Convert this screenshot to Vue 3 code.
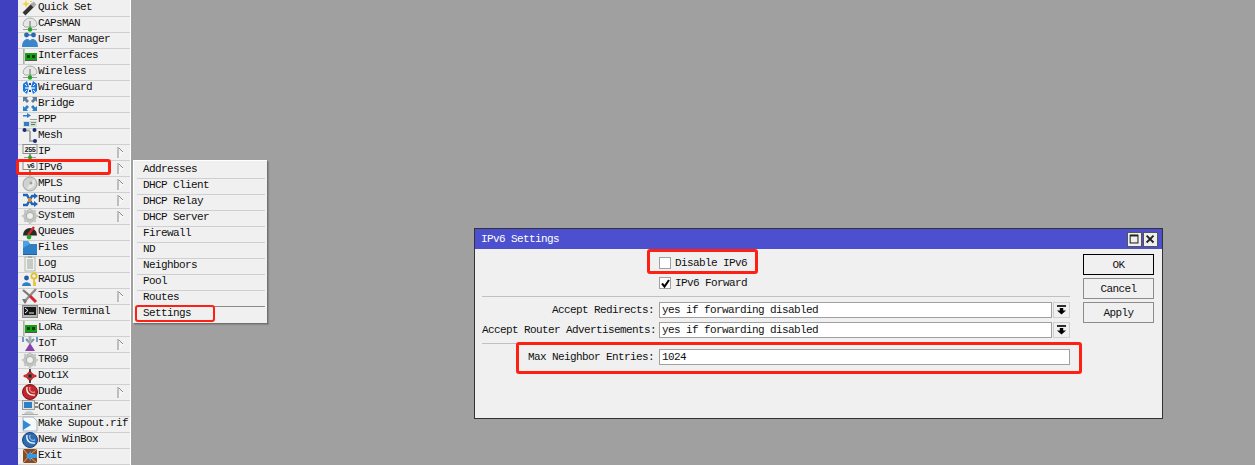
<script setup>
const icons = {
  wand: '<path d="M2 14 L11 5" stroke="#333" stroke-width="4"/><path d="M10 6 L13 3" stroke="#aaa" stroke-width="4"/><path d="M4 0 L5 3 L8 4 L5 5 L4 8 L3 5 L0 4 L3 3 Z" fill="#f2d22e"/><path d="M8 1h2v1H8z" fill="#f2d22e"/>',
  dome: '<path d="M1 9 A7 7 0 0 1 15 9 L13 11 H3 Z" fill="#e6e8e6" stroke="#a8aca8"/><path d="M8 5 V12" stroke="#8a8f8a" stroke-width="1.4"/><rect x="1" y="13" width="14" height="1" fill="#9a9f9a"/><circle cx="8" cy="13.5" r="2.2" fill="#1fa51f"/>',
  users: '<circle cx="4.5" cy="3" r="2.4" fill="#2a6aa8"/><circle cx="11.5" cy="3" r="2.4" fill="#2a6aa8"/><rect x="6" y="2.4" width="4" height="1.2" fill="#2a6aa8"/><path d="M0 15 C0 8 4 7 5.5 7 C7 7 8 8 8 9 C8 8 9 7 10.5 7 C12 7 16 8 16 15 Z" fill="#3a86cc"/>',
  card: '<rect x="1" y="1" width="1.6" height="15" fill="#a9b4a9"/><rect x="3" y="5" width="12" height="7" fill="#17a017"/><rect x="5" y="7" width="3" height="3" fill="#1a3a1a"/><rect x="10" y="7" width="3" height="3" fill="#1a3a1a"/><rect x="3" y="12" width="12" height="1" fill="#555"/>',
  wireguard: '<path d="M1 4 L5 1 L7 7 L5 14 L1 11 Z" fill="#1977dd"/><path d="M15 4 L11 1 L9 7 L11 14 L15 11 Z" fill="#1977dd"/><path d="M3 8 H13" stroke="#fff" stroke-width="1.2"/><path d="M3 4 L5 6 M13 4 L11 6 M3 12 L5 10 M13 12 L11 10" stroke="#fff"/><path d="M7 3h2v2H7zM7 10h2v2H7z" fill="#0e4f9e"/>',
  bridge: '<path d="M1 1 H6 L4.6 2.6 L7 5 L5 7 L2.6 4.6 L1 6 Z" fill="#5f7d9b"/><path d="M15 1 H10 L11.4 2.6 L9 5 L11 7 L13.4 4.6 L15 6 Z" fill="#5f7d9b"/><path d="M1 15 H6 L4.6 13.4 L7 11 L5 9 L2.6 11.4 L1 10 Z" fill="#2f7fc7"/><path d="M15 15 H10 L11.4 13.4 L9 11 L11 9 L13.4 11.4 L15 10 Z" fill="#2f7fc7"/>',
  ppp: '<path d="M1 3 H5 V1 L9 3.5 L5 6 V4.5 H1 Z" fill="#2f7fc7"/><rect x="1" y="9" width="14" height="6" fill="#d8dcd8"/><rect x="2" y="10" width="5" height="4" fill="#2f7fc7"/><rect x="8" y="7" width="7" height="1" fill="#9aa09a"/><rect x="9" y="10" width="5" height="1" fill="#8a8f8a"/><rect x="9" y="12" width="4" height="1" fill="#28a028"/>',
  mesh: '<path d="M3 2.5 H8 M8 3 V13 H13" stroke="#a8aca8" stroke-width="2" fill="none"/><circle cx="2.5" cy="2" r="2" fill="#1b2c7a"/><circle cx="12.5" cy="2" r="2" fill="#1b2c7a"/><circle cx="13" cy="13" r="2" fill="#1b2c7a"/>',
  ip: '<rect x="1" y="0.5" width="14" height="9" fill="#f4f4f4" stroke="#8a8f8a"/><text x="8" y="8" text-anchor="middle" font-family="Liberation Mono" font-size="7" font-weight="700" fill="#222">255</text><rect x="7" y="10" width="2" height="3" fill="#8a8f8a"/><rect x="2" y="13" width="12" height="1" fill="#9a9f9a"/><circle cx="8" cy="13.5" r="2" fill="#1fa51f"/>',
  ipv6: '<rect x="1" y="0.5" width="14" height="9" fill="#f4f4f4" stroke="#8a8f8a"/><text x="8.5" y="8" text-anchor="middle" font-family="Liberation Mono" font-size="7" font-weight="700" fill="#222">v6</text><rect x="7" y="10" width="2" height="3" fill="#8a8f8a"/><rect x="2" y="13" width="12" height="1" fill="#9a9f9a"/><circle cx="8" cy="13.5" r="2" fill="#1fa51f"/>',
  disc: '<circle cx="8" cy="8" r="7" fill="#cfd3cf" stroke="#a0a5a0"/><path d="M12 3 A7 7 0 0 1 5 13 L8 8 Z" fill="#e8eae8"/><circle cx="9" cy="7" r="1.5" fill="#9ba09b"/>',
  routing: '<path d="M1 3 H5 L10 12 H13" stroke="#1e66b8" stroke-width="2.4" fill="none"/><path d="M1 13 H5 L10 4 H13" stroke="#1e66b8" stroke-width="2.4" fill="none"/><path d="M12 1 L16 4 L12 7 Z M12 9 L16 12 L12 15 Z" fill="#1e66b8"/><rect x="6" y="6" width="3" height="4" fill="#d88a2a"/>',
  gear: '<circle cx="8" cy="8" r="5" fill="none" stroke="#bcc0bc" stroke-width="3.4"/><path d="M8 0 V16 M0 8 H16 M2.3 2.3 L13.7 13.7 M13.7 2.3 L2.3 13.7" stroke="#c4c8c4" stroke-width="2.2"/><circle cx="8" cy="8" r="3.6" fill="#f0f0f0" stroke="#a8aca8"/>',
  queues: '<path d="M1 11 A7 7 0 0 1 15 11 Z" fill="#2a2a2a"/><path d="M6 11 L12 3" stroke="#d8242a" stroke-width="2.4"/><rect x="1" y="11" width="14" height="1" fill="#888"/><circle cx="7" cy="13" r="2.4" fill="#1fa51f"/>',
  folder: '<path d="M1 1 H6 L8 4 H15 V15 H1 Z" fill="#2f7fc7"/><path d="M1 1 H6 L8 4 L1 8 Z" fill="#4da0e4"/><rect x="1" y="14" width="14" height="1" fill="#1f5f9f"/>',
  log: '<rect x="3" y="1" width="10" height="14" fill="#f0f2ee" stroke="#b0b8ae"/><path d="M5 4h6M5 6h6M5 8h6M5 10h6M5 12h6" stroke="#9aa49a"/><rect x="6" y="0" width="4" height="2" fill="#a8b0a6"/>',
  radius: '<circle cx="4.5" cy="6" r="2.4" fill="#1f5f9f"/><path d="M0 14 C0 9 9 9 9 14 Z" fill="#2f7fc7"/><circle cx="12" cy="4" r="2.6" fill="none" stroke="#e3c028" stroke-width="1.8"/><path d="M12 7 V14 M12 11 H14 M12 13 H14" stroke="#e3c028" stroke-width="1.6"/>',
  tools: '<path d="M14 1 L2 14" stroke="#8e908e" stroke-width="2.4"/><path d="M0 11 L3 16 L5 13 L3 11 Z" fill="#777"/><path d="M1 2 L8 8" stroke="#777" stroke-width="2.2"/><path d="M8 8 L14 14" stroke="#d8242a" stroke-width="3"/>',
  terminal: '<rect x="0.5" y="1.5" width="15" height="12" fill="#b5b8b5" stroke="#888"/><rect x="2" y="3" width="12" height="8" fill="#181818"/><path d="M3 4 L6 6.5 L3 9" stroke="#eee" fill="none"/><path d="M7 9h5" stroke="#eee"/>',
  iot: '<path d="M3 15 L8 7 L13 15 Z" fill="#8a3fa8"/><path d="M4 3 L8 7 L12 3" stroke="#7a94a8" stroke-width="2.2" fill="none"/><rect x="6.6" y="0" width="2.8" height="7" fill="#a8b0b8"/><path d="M1 1 V6 M15 1 V6" stroke="#3a74b0" stroke-width="1.4"/>',
  dot1x: '<path d="M8 4 L12 8 L8 12 L4 8 Z" fill="none" stroke="#c0262a" stroke-width="2"/><circle cx="8" cy="8" r="2" fill="#222"/><path d="M8 1 V4 M8 12 V15" stroke="#222" stroke-width="1.6"/><path d="M1 8 L3.5 6 V10 Z M15 8 L12.5 6 V10 Z" fill="#c0262a"/>',
  dude: '<circle cx="8" cy="8" r="7.5" fill="#c0262a"/><circle cx="8" cy="8" r="7.5" fill="none" stroke="#7a1518"/><path d="M5 3 C4 8 7 12 13 11" stroke="#fff" stroke-width="1.2" fill="none"/><path d="M8 3 C7 7 9 9 13 8" stroke="#f6c4c4" fill="none"/>',
  container: '<rect x="0.5" y="0.5" width="12" height="9" fill="#dfe2df" stroke="#999"/><rect x="2" y="2" width="8" height="6" fill="#2f7fc7"/><rect x="13" y="2" width="3" height="2" fill="#888"/><rect x="13" y="6" width="3" height="2" fill="#888"/><path d="M2 14 C3 10 11 10 12 14 Z" fill="#c8ccc8"/><rect x="0" y="14" width="16" height="1" fill="#a8aca8"/>',
  supout: '<path d="M1 1 H11 L15 5 V15 H1 Z" fill="#f6f8fa" stroke="#a8b4c0"/><path d="M1 4 L9 9 L1 14 Z" fill="#2f8ad8"/>',
  winbox: '<circle cx="8" cy="8" r="7.5" fill="#2c6cb4"/><circle cx="8" cy="8" r="7.5" fill="none" stroke="#1c4478"/><path d="M5 3 C4 8 7 12 13 11" stroke="#fff" stroke-width="1.2" fill="none"/><path d="M8 3 C7 7 9 9 13 8" stroke="#c4daf0" fill="none"/>',
  exit: '<rect x="1" y="1" width="14" height="14" fill="#8a4a22"/><path d="M1 1 L7 8 L1 15 M15 1 L9 6 M15 15 L9 10" stroke="#e0a878" fill="none"/><path d="M4 8 L9 3 V6 H15 V10 H9 V13 Z" fill="#2f9ae8"/>'
}

const items = [
  ['Quick Set', 'wand'], ['CAPsMAN', 'dome'], ['User Manager', 'users'], ['Interfaces', 'card'],
  ['Wireless', 'dome'], ['WireGuard', 'wireguard'], ['Bridge', 'bridge'], ['PPP', 'ppp'],
  ['Mesh', 'mesh'], ['IP', 'ip', true], ['IPv6', 'ipv6', true], ['MPLS', 'disc', true],
  ['Routing', 'routing', true], ['System', 'gear', true], ['Queues', 'queues'], ['Files', 'folder'],
  ['Log', 'log'], ['RADIUS', 'radius'], ['Tools', 'tools', true], ['New Terminal', 'terminal'],
  ['LoRa', 'card'], ['IoT', 'iot', true], ['TR069', 'gear'], ['Dot1X', 'dot1x'],
  ['Dude', 'dude', true], ['Container', 'container'], ['Make Supout.rif', 'supout'],
  ['New WinBox', 'winbox'], ['Exit', 'exit']
].map(([label, icon, more]) => ({ label, icon, more }))

const subItems = ['Addresses', 'DHCP Client', 'DHCP Relay', 'DHCP Server', 'Firewall', 'ND', 'Neighbors', 'Pool', 'Routes', 'Settings']
</script>

<template>
  <div class="desktop">
    <div class="strip"></div>
    <nav class="menu">
      <div v-for="item in items" :key="item.label" class="row">
        <svg class="icon" viewBox="0 0 16 16" width="16" height="16" v-html="icons[item.icon]"></svg>
        <span class="label">{{ item.label }}</span>
        <svg v-if="item.more" class="more" viewBox="0 0 7 11" width="7" height="11">
          <path d="M1 0 V11" stroke="#8c8c8c" fill="none" />
          <path d="M2 9 L6 5" stroke="#ffffff" fill="none" />
          <path d="M2 1 L6 5" stroke="#8c8c8c" fill="none" />
        </svg>
      </div>
    </nav>
    <main class="canvas"></main>

    <div class="submenu">
      <div v-for="s in subItems" :key="s" class="sub-row" :class="{ 'before-last': s === 'Routes' }">{{ s }}</div>
    </div>

    <section class="window">
      <header class="title">
        <span>IPv6 Settings</span>
        <div class="win-btns">
          <button class="win-btn">
            <svg viewBox="0 0 15 15" width="15" height="15"><rect x="2.5" y="2.5" width="9" height="9" fill="none" stroke="#222" stroke-width="1.2" /><path d="M2.5 3 H11.5" stroke="#222" stroke-width="2" /></svg>
          </button>
          <button class="win-btn">
            <svg viewBox="0 0 15 15" width="15" height="15"><path d="M3 3 L11 11 M11 3 L3 11" stroke="#222" stroke-width="2.2" /></svg>
          </button>
        </div>
      </header>
      <div class="win-body">
        <div class="form">
          <div class="line check-line">
            <span class="cap"></span>
            <div class="check-wrap"><span class="check"></span><span>Disable IPv6</span></div>
          </div>
          <div class="line check-line">
            <span class="cap"></span>
            <div class="check-wrap">
              <span class="check">
                <svg viewBox="0 0 11 11" width="11" height="11"><path d="M2 5.5 L4.5 8.5 L9 2" stroke="#000" stroke-width="2" fill="none" /></svg>
              </span>
              <span>IPv6 Forward</span>
            </div>
          </div>
          <hr class="sep first-sep" />
          <div class="line">
            <span class="cap">Accept Redirects:</span>
            <div class="input">yes if forwarding disabled</div>
            <span class="drop"><svg viewBox="0 0 11 10" width="11" height="10"><path d="M1 1 H10" stroke="#000" stroke-width="1.6" /><path d="M3.8 3 H7.2 V5.5 H10 L5.5 9.5 L1 5.5 H3.8 Z" fill="#000" /></svg></span>
          </div>
          <div class="line second">
            <span class="cap">Accept Router Advertisements:</span>
            <div class="input">yes if forwarding disabled</div>
            <span class="drop"><svg viewBox="0 0 11 10" width="11" height="10"><path d="M1 1 H10" stroke="#000" stroke-width="1.6" /><path d="M3.8 3 H7.2 V5.5 H10 L5.5 9.5 L1 5.5 H3.8 Z" fill="#000" /></svg></span>
          </div>
          <hr class="sep" />
          <div class="line">
            <span class="cap">Max Neighbor Entries:</span>
            <div class="input">1024</div>
          </div>
        </div>
        <div class="actions">
          <button class="act default">OK</button>
          <button class="act">Cancel</button>
          <button class="act">Apply</button>
        </div>
      </div>
    </section>

    <div class="mark mark-ipv6"></div>
    <div class="mark mark-settings"></div>
    <div class="mark mark-disable"></div>
    <div class="mark mark-max"></div>
  </div>
</template>

<style>
html, body { margin: 0; background: #a0a0a0; }
</style>

<style scoped>
.desktop {
  position: relative;
  display: flex;
  width: 1255px;
  height: 465px;
  overflow: hidden;
  background: #a0a0a0;
  font-family: "Liberation Mono", monospace;
  font-size: 11px;
  letter-spacing: -0.6px;
  color: #111;
}
.strip { width: 18px; background: #3f40c0; flex: none; }
.menu {
  width: 113px;
  flex: none;
  box-sizing: border-box;
  padding-top: 1px;
  background: #f0f0f0;
  border-right: 1px solid #fff;
}
.row {
  display: flex;
  align-items: center;
  box-sizing: border-box;
  height: 16px;
  padding: 0 6px 1px 4px;
  border-bottom: 1px solid #cfcfcf;
}
.icon { flex: none; display: block; }
.label { line-height: 14px; margin-bottom: 2px; white-space: nowrap; }
.more { margin-left: auto; flex: none; }
.canvas { flex: 1; }

.submenu {
  position: absolute;
  left: 133px;
  top: 160px;
  width: 134px;
  height: 163px;
  box-sizing: border-box;
  padding: 2px 2px 0 3px;
  background: #f0f0f0;
  border-top: 1px solid #fff;
  border-left: 1px solid #fff;
  box-shadow: 1px 1px 0 #707070, 2px 2px 1px #8a8a8a;
}
.sub-row {
  box-sizing: border-box;
  height: 16px;
  padding-left: 6px;
  line-height: 12px;
  border-bottom: 1px solid #cfcfcf;
}
.sub-row:last-child { border-bottom: none; }
.before-last { border-bottom-color: #8c8c8c; }

.window {
  position: absolute;
  left: 474px;
  top: 228px;
  width: 689px;
  height: 191px;
  box-sizing: border-box;
  border: 1px solid #333;
  background: #f0f0f0;
  display: flex;
  flex-direction: column;
}
.title {
  height: 20px;
  flex: none;
  display: flex;
  align-items: center;
  justify-content: space-between;
  padding: 0 4px 0 6px;
  background: #4c50ce;
  color: #fff;
}
.win-btns { display: flex; gap: 1px; margin-top: 1px; }
.win-btn {
  width: 15px;
  height: 15px;
  padding: 0;
  border: 1px solid #555;
  background: #efefef;
  display: flex;
  align-items: center;
  justify-content: center;
  box-sizing: border-box;
}
.win-body { flex: 1; display: flex; }
.form { width: 588px; margin-left: 7px; padding-top: 4px; flex: none; }
.line { display: flex; align-items: center; height: 16px; margin-bottom: 0; }
.second { margin-top: 4px; }
.check-line { height: 20px; }
.cap { width: 172px; margin-right: 5px; text-align: right; white-space: nowrap; flex: none; }
.check-wrap { display: flex; align-items: center; gap: 4px; }
.check {
  width: 12px;
  height: 12px;
  box-sizing: border-box;
  border: 1px solid #a0a0a0;
  background: #fff;
  display: flex;
  align-items: center;
  justify-content: center;
}
.check svg { flex: none; }
.sep {
  margin: 5px 0;
  border: none;
  border-top: 1px solid #c0c0c0;
  height: 0;
}
.first-sep { margin-top: 3px; }
.input {
  flex: 1;
  height: 16px;
  box-sizing: border-box;
  border: 1px solid #a0a0a0;
  background: #fff;
  padding-left: 2px;
  line-height: 14px;
}
.drop {
  width: 17px;
  height: 16px;
  margin-left: 1px;
  flex: none;
  box-sizing: border-box;
  border: 1px solid #cfcfcf;
  display: flex;
  align-items: center;
  justify-content: center;
}
.actions {
  margin-left: 13px;
  padding-top: 5px;
  width: 71px;
  display: flex;
  flex-direction: column;
  gap: 3px;
}
.act {
  height: 21px;
  padding: 0;
  box-sizing: border-box;
  border: 1px solid #8c8c8c;
  background: #f0f0f0;
  font: inherit;
  letter-spacing: inherit;
  color: inherit;
}
.default { border-color: #000; }

.mark {
  position: absolute;
  box-sizing: border-box;
  border: 2px solid #ff2014;
  border-radius: 3px;
  pointer-events: none;
}
.mark-ipv6 { left: 16px; top: 159px; width: 95px; height: 16px; border-width: 3px; }
.mark-settings { left: 135px; top: 305px; width: 80px; height: 17px; border-width: 2px; }
.mark-disable { left: 647px; top: 249px; width: 111px; height: 25px; border-width: 3px; }
.mark-max { left: 516px; top: 342px; width: 566px; height: 32px; border-width: 3px; }
</style>
